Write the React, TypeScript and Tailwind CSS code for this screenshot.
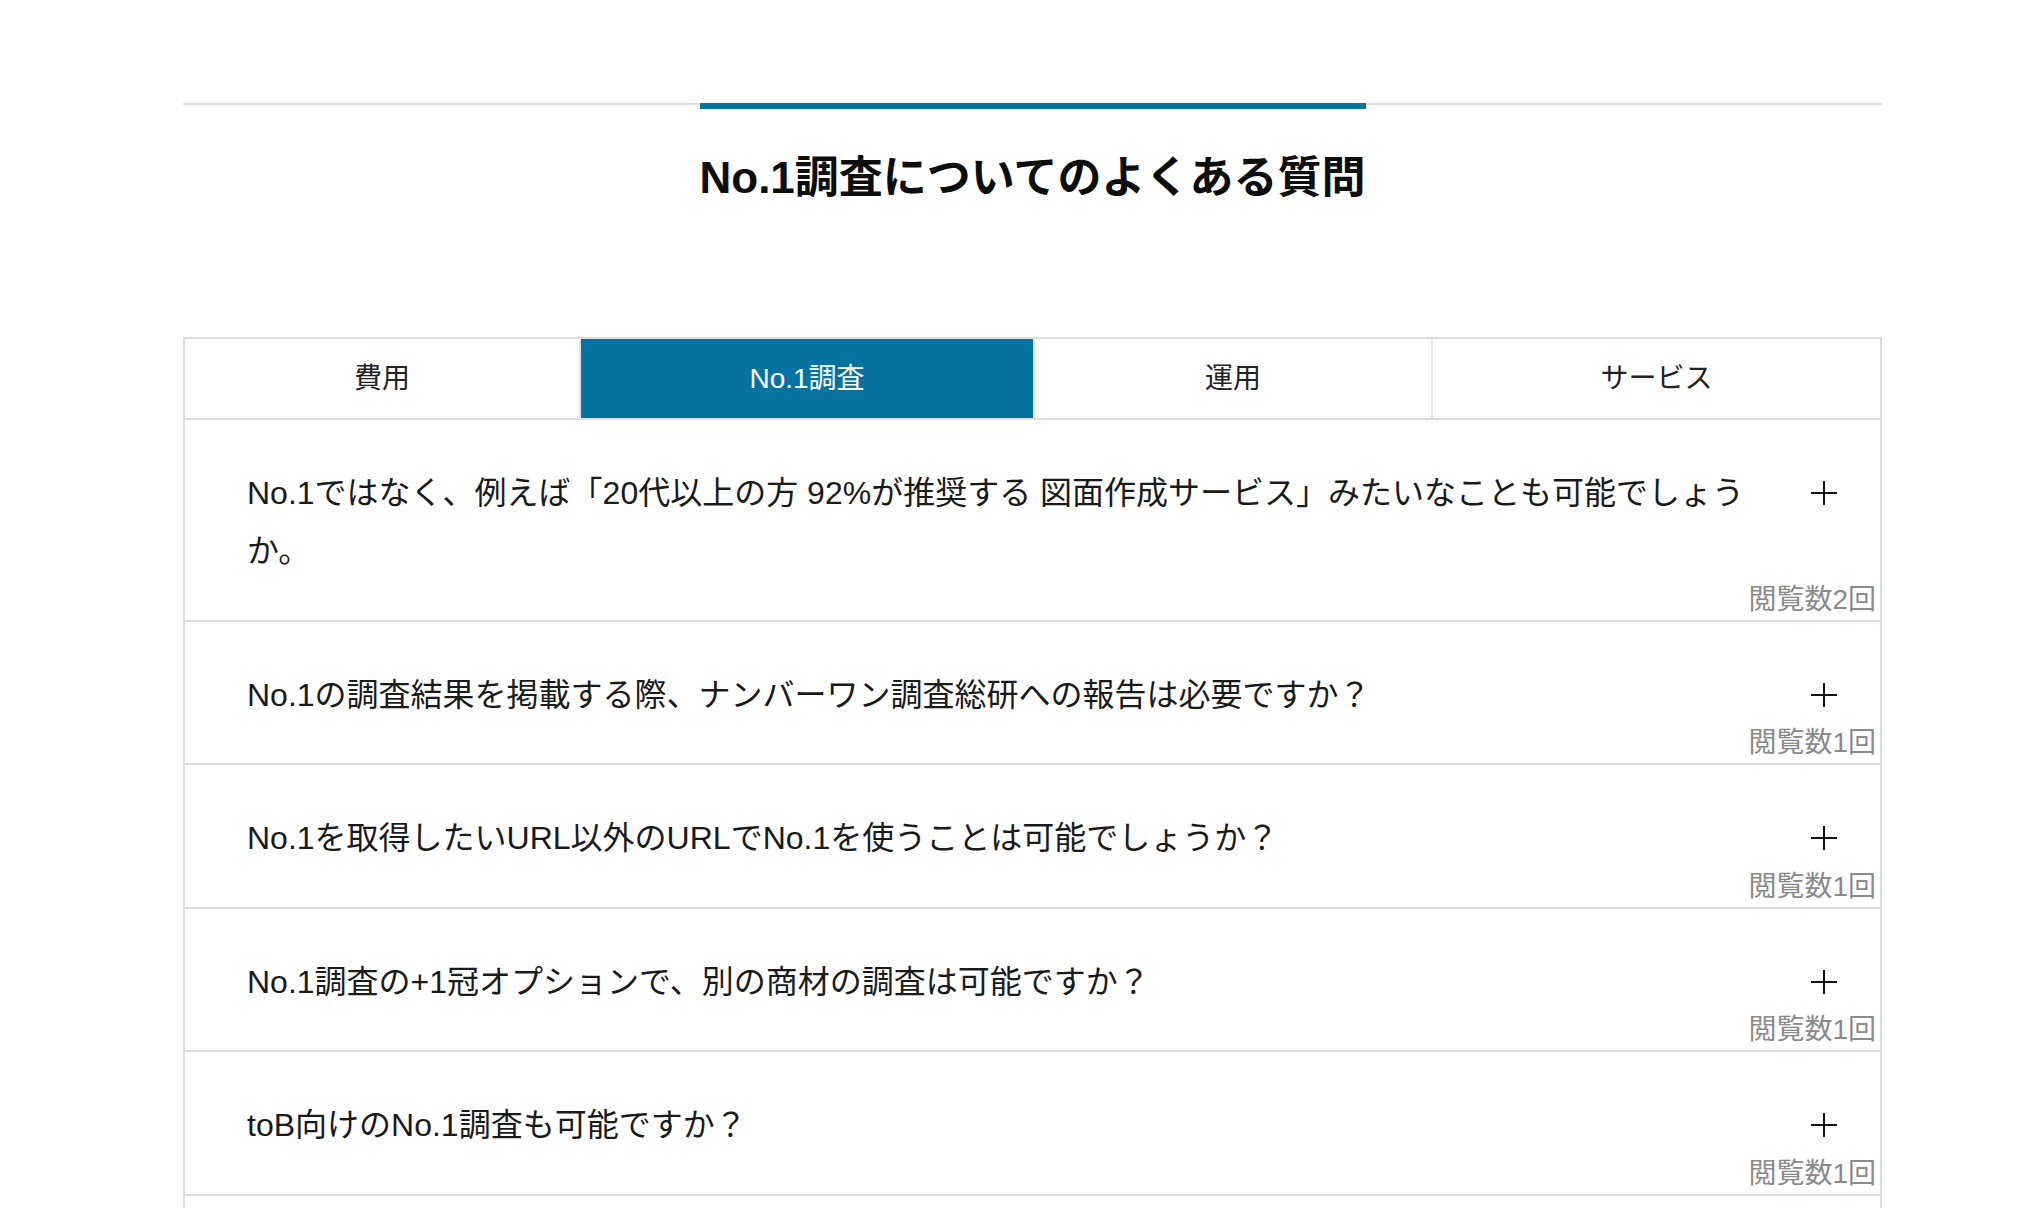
import React from "react";

const FONT = '"Liberation Sans", "Noto Sans CJK JP", sans-serif';

const tabs = [
  { label: "費用", cls: "w-[394px]", active: false },
  { label: "No.1調査", cls: "w-[454px]", active: true },
  { label: "運用", cls: "w-[398px]", active: false },
  { label: "サービス", cls: "flex-1", active: false },
];

const faqs = [
  {
    q: "No.1ではなく、例えば「20代以上の方 92%が推奨する 図面作成サービス」みたいなことも可能でしょうか。",
    views: "閲覧数2回",
  },
  { q: "No.1の調査結果を掲載する際、ナンバーワン調査総研への報告は必要ですか？", views: "閲覧数1回" },
  { q: "No.1を取得したいURL以外のURLでNo.1を使うことは可能でしょうか？", views: "閲覧数1回" },
  { q: "No.1調査の+1冠オプションで、別の商材の調査は可能ですか？", views: "閲覧数1回" },
  { q: "toB向けのNo.1調査も可能ですか？", views: "閲覧数1回" },
  { q: "No.1調査の結果、No.1が取得できなかった場合はどうなりますか？", views: "閲覧数1回" },
];

function Plus() {
  return (
    <svg width="26" height="26" viewBox="0 0 26 26" className="block">
      <line x1="0" y1="13" x2="26" y2="13" stroke="#111" strokeWidth="2" />
      <line x1="13" y1="1" x2="13" y2="25" stroke="#111" strokeWidth="2" />
    </svg>
  );
}

export default function App() {
  return (
    <div className="min-h-[1208px] bg-white overflow-hidden" style={{ fontFamily: FONT }}>
      <div className="ml-[183px] w-[1699px] pt-[103px]">
        {/* header rule with blue accent */}
        <div className="flex items-start">
          <div className="flex-1 h-[2px] bg-[#dddddd]" />
          <div className="w-[666px] h-[6px] bg-[#0672a0]" />
          <div className="flex-1 h-[2px] bg-[#dddddd]" />
        </div>

        <h1 className="mt-[39px] text-center text-[44px] leading-[60px] font-bold text-[#0d0d0d]">
          No.1調査についてのよくある質問
        </h1>

        {/* tabs */}
        <div className="mt-[129px] flex border-2 border-[#dddddd] h-[83px]">
          {tabs.map((t, i) => (
            <div
              key={t.label}
              className={`${t.cls} ${i > 0 ? "border-l-2 border-[#e4e4e4]" : ""} ${
                t.active ? "bg-[#0672a0] text-white" : "bg-white text-[#222222]"
              } flex items-center justify-center text-[28px] leading-none pt-[1px]`}
            >
              {t.label}
            </div>
          ))}
        </div>

        {/* faq list */}
        <div>
          {faqs.map((f, i) => (
            <div key={i} className="border-x-2 border-b-2 border-[#dddddd] pt-[44px]">
              <div className="flex items-start pl-[62px] pr-[43px]">
                <p className="w-[1520px] text-[32px] leading-[58px] text-[#1a1a1a]">{f.q}</p>
                <div className="ml-auto h-[58px] flex items-center">
                  <Plus />
                </div>
              </div>
              <div className="h-[39.5px] flex items-center justify-end pr-[4px] text-[28px] leading-none text-[#8a8a8a]">
                {f.views}
              </div>
            </div>
          ))}
        </div>
      </div>
    </div>
  );
}
